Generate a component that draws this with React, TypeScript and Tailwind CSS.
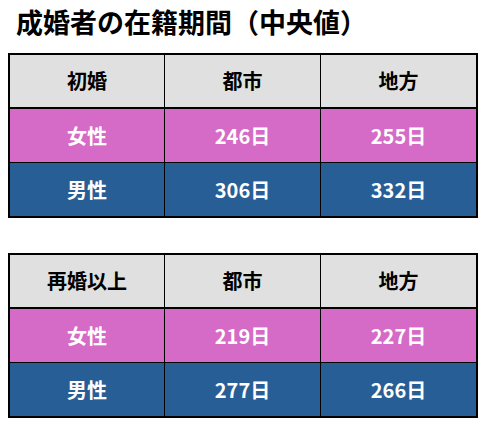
import React from "react";

type Row = { label: string; city: string; rural: string; bg: string };

const font = { fontFamily: '"Noto Sans CJK JP", "Noto Sans", sans-serif' };

function Table({ head, rows }: { head: string; rows: Row[] }) {
  return (
    <div className="ml-2 w-[470px] border-2 border-black" style={font}>
      <div className="flex h-[54px] border-b-2 border-black bg-[#e0e0e0] text-[20px] font-bold text-black">
        <div className="flex w-[155px] items-center justify-center border-r border-black">{head}</div>
        <div className="flex w-[156px] items-center justify-center border-r border-black">都市</div>
        <div className="flex flex-1 items-center justify-center">地方</div>
      </div>
      {rows.map((r, i) => (
        <div
          key={r.label}
          className={`flex text-[20px] font-bold text-white ${r.bg} ${i === 0 ? "h-[54px] border-b border-black" : "h-[53px]"}`}
        >
          <div className="flex w-[155px] items-center justify-center border-r border-black">{r.label}</div>
          <div className="flex w-[156px] items-center justify-center border-r border-black">{r.city}</div>
          <div className="flex flex-1 items-center justify-center">{r.rural}</div>
        </div>
      ))}
    </div>
  );
}

export default function App() {
  return (
    <div className="h-[421px] w-[481px] bg-white">
      <div className="pl-4 text-[27px] font-bold leading-[44px] text-black" style={font}>
        成婚者の在籍期間（中央値）
      </div>
      <div className="mt-[9px] flex flex-col gap-[35px]">
        <Table
          head="初婚"
          rows={[
            { label: "女性", city: "246日", rural: "255日", bg: "bg-[#d56bc6]" },
            { label: "男性", city: "306日", rural: "332日", bg: "bg-[#285e96]" },
          ]}
        />
        <Table
          head="再婚以上"
          rows={[
            { label: "女性", city: "219日", rural: "227日", bg: "bg-[#d56bc6]" },
            { label: "男性", city: "277日", rural: "266日", bg: "bg-[#285e96]" },
          ]}
        />
      </div>
    </div>
  );
}
